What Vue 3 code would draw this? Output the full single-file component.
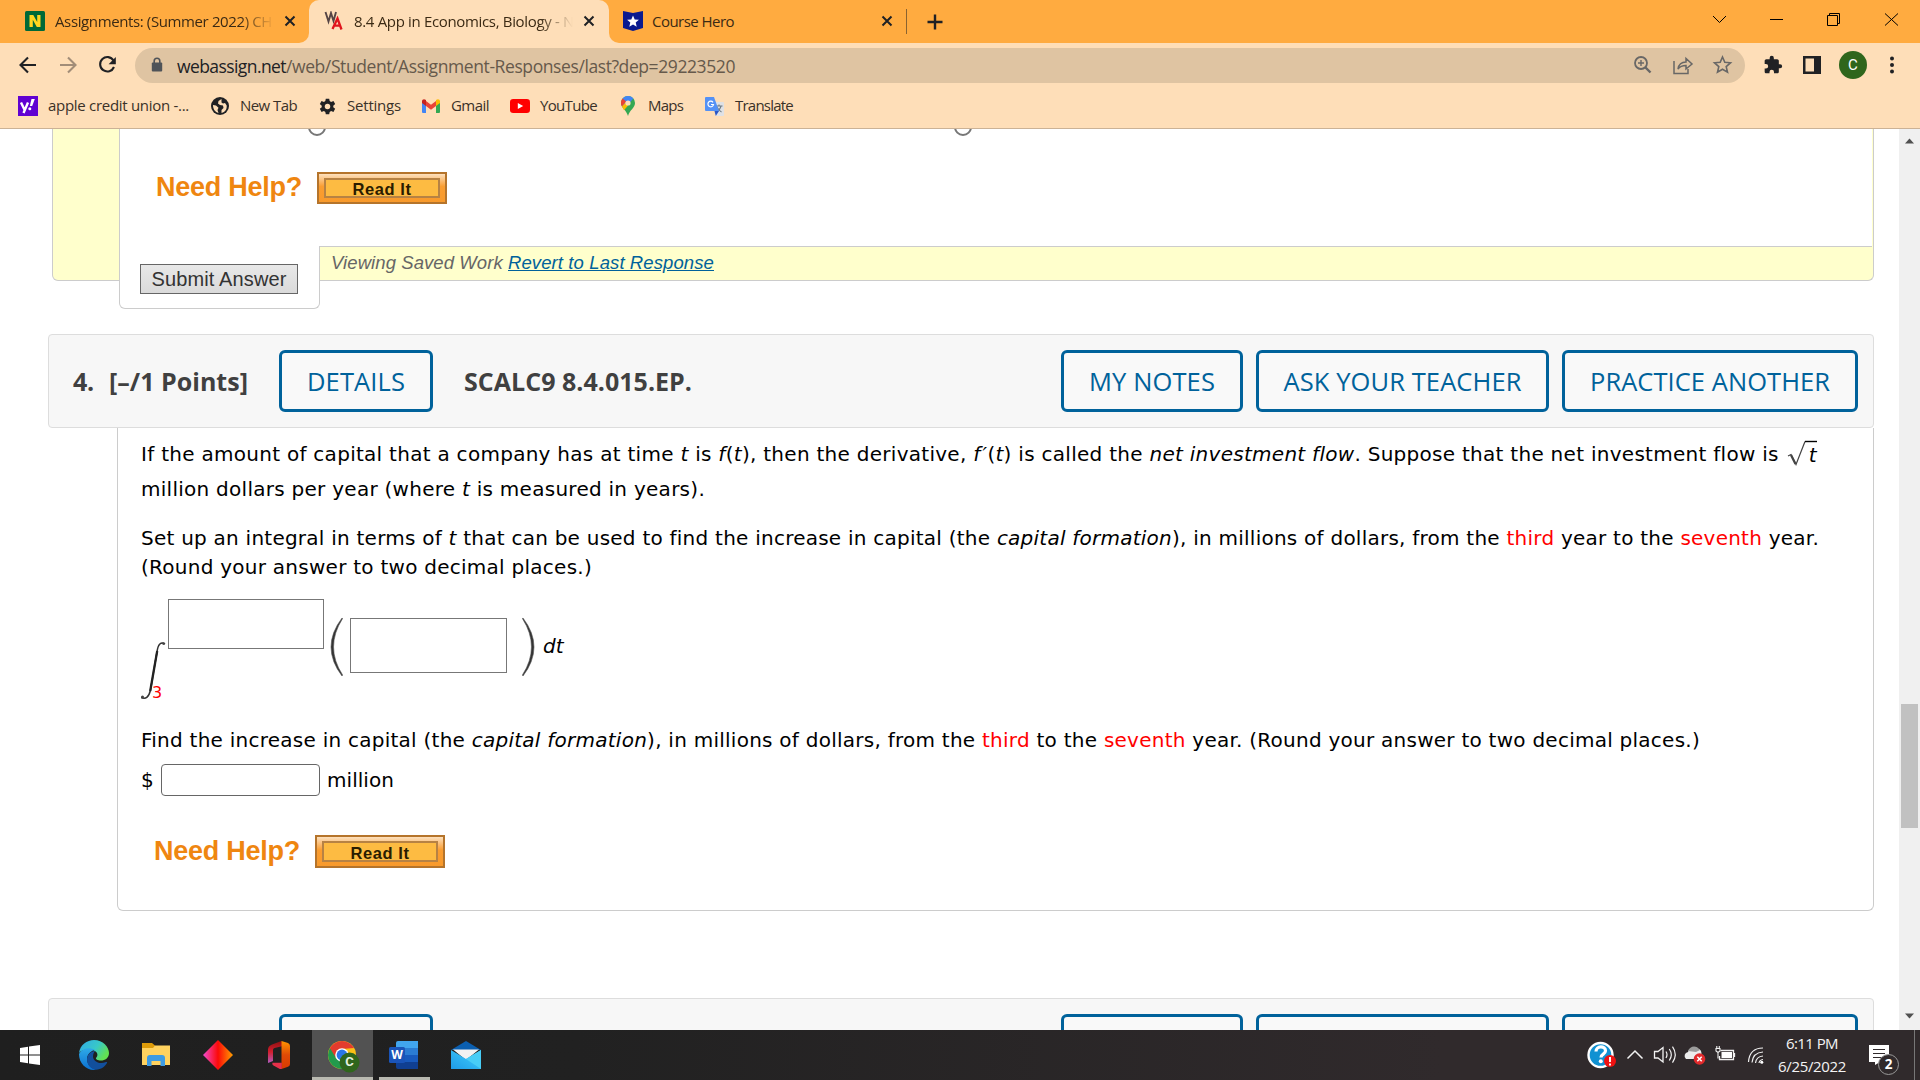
<script setup>
import { ref } from 'vue'

// Spreads letters so that a label takes exactly the given width in pixels.
const vFit = {
  mounted(el, { value }) {
    const natural = el.getBoundingClientRect().width
    const gap = (value - natural) / el.textContent.length
    el.style.letterSpacing = `${gap}px`
  }
}

const third = ref('third')
const seventh = ref('seventh')
const actions = [
  { label: 'MY NOTES', cls: 'notes', w: 126 },
  { label: 'ASK YOUR TEACHER', cls: 'ask', w: 238 },
  { label: 'PRACTICE ANOTHER', cls: 'practice', w: 240 }
]
</script>

<template>
  <div class="screen">
    <header class="tabs">
      <div class="tab tab-first">
        <svg class="fav" width="20" height="20" viewBox="0 0 20 20"><rect width="20" height="20" rx="1.5" fill="#006937" /><path d="M4.5 16V4h3.8l3.9 7V4h3.3v12h-3.7L7.800 8.800V16z" fill="#ffd51f" /></svg>
        <span class="tab-title"><span v-fit="217" class="t">Assignments: (Summer 2022) CH</span></span>
        <svg class="x" width="12" height="12" viewBox="0 0 12 12"><path d="M1.500 1.500l9 9M10.500 1.500l-9 9" /></svg>
      </div>
      <div class="tab tab-active">
        <svg class="fav wa" width="20" height="20" viewBox="0 0 20 20"><path d="M1.500 1l3 9.500L7 2l2.500 8L12 1" fill="none" stroke="#544" stroke-width="1.900" /><path d="M8.500 18l5-10.500L17.500 18.500M10 14.700h6.500" fill="none" stroke="#e0151c" stroke-width="2.300" /></svg>
        <span class="tab-title"><span v-fit="220" class="t">8.4 App in Economics, Biology - N</span></span>
        <svg class="x" width="12" height="12" viewBox="0 0 12 12"><path d="M1.500 1.500l9 9M10.500 1.500l-9 9" /></svg>
      </div>
      <div class="tab tab-last">
        <svg class="fav" width="20" height="20" viewBox="0 0 20 20"><path d="M0 0l10 2L20 0v17l-10 3L0 17z" fill="#0a1a8f" /><path d="M10 4.500l1.700 3.900 4.200.4-3.200 2.800 1 4.100-3.700-2.200-3.700 2.200 1-4.100-3.200-2.800 4.200-.4z" fill="#fff" /></svg>
        <span v-fit="82" class="t">Course Hero</span>
        <svg class="x" width="12" height="12" viewBox="0 0 12 12"><path d="M1.500 1.500l9 9M10.500 1.500l-9 9" /></svg>
      </div>
      <i class="tab-sep"></i>
      <svg class="plus" width="16" height="16" viewBox="0 0 16 16"><path d="M8 .5v15M.5 8h15" stroke="#202124" stroke-width="2.400" /></svg>
      <svg class="win" width="190" height="20" viewBox="0 0 190 20" fill="none" stroke="#000" stroke-width="1">
        <path d="M3 7l6.500 6.500L16 7" /><path d="M60 10.500h13" /><path d="M117.500 6.500h10v10h-10zM119.500 6v-1.500h10v10h-2" /><path d="M175 4.500l13 12M188 4.500l-13 12" />
      </svg>
    </header>

    <div class="toolbar">
      <svg class="nav" width="136" height="36" viewBox="0 0 136 36" fill="none" stroke-width="2.100">
        <path d="M36 18H21M28 10.500L20.500 18l7.500 7.500" stroke="#202124" />
        <path d="M60 18h15M68 10.500l7.500 7.500-7.500 7.500" stroke="#a28d78" />
        <path d="M113.500 13.500A7.200 7.200 0 1 0 114 20" stroke="#202124" /><path d="M115.800 10v7.200h-7.200z" fill="#202124" />
      </svg>
      <div class="omnibox">
        <svg class="lock" width="12" height="16" viewBox="0 0 12 16"><rect x=".8" y="5.500" width="10.400" height="9" rx="1" fill="#4f5358" /><path d="M3.200 6V4a2.800 2.800 0 0 1 5.600 0V6" fill="none" stroke="#4f5358" stroke-width="1.600" /></svg>
        <span class="url"><span v-fit="109" class="t host">webassign.net</span><span v-fit="449" class="t">/web/Student/Assignment-Responses/last?dep=29223520</span></span>
        <svg class="omni-icons" width="100" height="24" viewBox="0 0 100 24" fill="none" stroke="#686766" stroke-width="1.800">
          <circle cx="8" cy="10" r="6" /><path d="M12.500 14.500l5 5" stroke-width="2.400" /><path d="M8 7v6M5 10h6" stroke-width="1.400" />
          <path d="M41 8v12.500h14V16" stroke-width="1.500" /><path d="M45 16c.8-5 4-7 8-7V5.500l6 5.500-6 5v-3.500c-3.500 0-6 .8-8 3.500z" stroke-width="1.500" />
          <path d="M89.500 4l2.300 5.300 5.700.5-4.300 3.800 1.300 5.600-5-3-5 3 1.300-5.600-4.300-3.800 5.700-.5z" stroke-width="1.600" />
        </svg>
      </div>
      <svg class="ext" width="20" height="20" viewBox="0 0 24 24"><path fill="#202124" d="M20.500 11H19V7c0-1.100-.9-2-2-2h-4V3.500a2.500 2.500 0 0 0-5 0V5H4c-1.100 0-2 .9-2 2v3.800h1.500a2.700 2.700 0 0 1 0 5.400H2V20c0 1.100.9 2 2 2h3.800v-1.500a2.700 2.700 0 0 1 5.400 0V22H17c1.100 0 2-.9 2-2v-4h1.500a2.500 2.500 0 0 0 0-5z" /></svg>
      <svg class="side" width="18" height="18" viewBox="0 0 18 18"><path fill="#202124" fill-rule="evenodd" d="M0 0h18v18H0zM2.500 2.500v13H11v-13z" /></svg>
      <span class="avatar">C</span>
      <svg class="dots" width="4" height="18" viewBox="0 0 4 18" fill="#202124"><circle cx="2" cy="2.500" r="2" /><circle cx="2" cy="9" r="2" /><circle cx="2" cy="15.500" r="2" /></svg>
    </div>

    <nav class="bookmarks">
      <a class="bm b1"><svg width="20" height="20" viewBox="0 0 20 20"><rect width="20" height="20" fill="#6001d2" /><path d="M3 6.500l3.400 7M10 6.500L5.500 17" stroke="#fff" stroke-width="2.400" fill="none" /><path d="M13.500 3h3.300l-2.600 7h-2.400z" fill="#fff" /><circle cx="11.800" cy="12.700" r="1.500" fill="#fff" /></svg><span v-fit="141" class="t">apple credit union -...</span></a>
      <a class="bm b2"><svg width="18" height="18" viewBox="0 0 18 18"><circle cx="9" cy="9" r="9" fill="#202124" /><path d="M10.500 2l-3 2-.5 2.500 2 1.500 3 .5.5 2.500-2 2v3c4-1 5.500-4 5.200-7.500L14 6l-2 .5-1.500-1zM2 8l3 .5 2.500 2.200-1 2.300 1 3C4 15 2 12 2 8z" fill="#fedeb8" /></svg><span v-fit="57" class="t">New Tab</span></a>
      <a class="bm b3"><svg width="17" height="17" viewBox="0 0 18 18"><path d="M7.200 0h3.600l.5 2.600 1.500.9L15.300 2.600l1.800 3.100-2 1.700v1.700l2 1.700-1.800 3.200-2.500-.9-1.500.9-.5 2.600H7.200L6.700 14l-1.500-.9-2.500.9L.9 10.800l2-1.700V7.400l-2-1.700 1.800-3.100 2.500.9 1.500-.9z" transform="translate(0 .7)" fill="#202124" /><circle cx="9" cy="9" r="2.900" fill="#fedeb8" /></svg><span v-fit="54" class="t">Settings</span></a>
      <a class="bm b4"><svg width="18" height="14" viewBox="0 0 18 14"><path d="M0 2v11a1 1 0 0 0 1 1h3V5z" fill="#4285f4" /><path d="M18 2v11a1 1 0 0 1-1 1h-3V5z" fill="#34a853" /><path d="M4 2v5l5 3.800L14 7V2L9 5.800z" fill="#ea4335" /><path d="M0 2.200C0 .5 2-.500 3.500.7L4 1v6L0 4z" fill="#c5221f" /><path d="M18 2.200c0-1.700-2-2.700-3.500-1.500L14 1v6l4-3z" fill="#fbbc04" /></svg><span v-fit="38" class="t">Gmail</span></a>
      <a class="bm b5"><svg width="20" height="14" viewBox="0 0 20 14"><rect width="20" height="14" rx="3.200" fill="#f00" /><path d="M7.800 4l5.400 3-5.400 3z" fill="#fff" /></svg><span v-fit="57" class="t">YouTube</span></a>
      <a class="bm b6"><svg width="14" height="20" viewBox="0 0 14 20"><path d="M7 0a7 7 0 0 1 7 7c0 5-5.500 7-7 13C5.500 14 0 12 0 7a7 7 0 0 1 7-7z" fill="#34a853" /><path d="M1.600 2.500A7 7 0 0 1 12.400 2.500L5 10.500 1 9.500z" fill="#4285f4" /><path d="M1.600 2.500L5.200 5.500 1 10.500A7 7 0 0 1 1.600 2.500z" fill="#ea4335" /><path d="M1 10.500l4-4.500 2 3.500-4 4.800z" fill="#fbbc04" /><circle cx="7" cy="7" r="2.600" fill="#fedeb8" /></svg><span v-fit="35" class="t">Maps</span></a>
      <a class="bm b7"><svg width="19" height="19" viewBox="0 0 19 19"><path d="M8 5h10a1 1 0 0 1 1 1v12a1 1 0 0 1-1 1h-7z" fill="#dfe1e5" /><path d="M10.500 9h7M14 7.500V9m2 0c-.8 3-2.500 5-5 6M12 10c1 2 2.500 4 4.500 5" stroke="#6d7a83" stroke-width="1.100" fill="none" /><path d="M1 0h8l5 14H1a1 1 0 0 1-1-1V1a1 1 0 0 1 1-1z" fill="#5491f5" /><path d="M9.500 14H14l-3.200 5z" fill="#2a56c6" /><path d="M8 5.300A2.800 2.800 0 1 0 8.500 7.500H6" stroke="#fff" stroke-width="1.200" fill="none" /></svg><span v-fit="58" class="t">Translate</span></a>
    </nav>

    <div class="view">
      <main class="page">
        <section class="prev">
          <div class="prev-body">
            <div class="radios"><i></i><i></i></div>
            <div class="help">
              <span v-fit="146" class="help-label">Need Help?</span>
              <button class="read"><span v-fit="59">Read It</span></button>
            </div>
          </div>
          <div class="prev-foot">
            <div class="submit-box"><button class="submit"><span v-fit="135">Submit Answer</span></button></div>
            <p class="saved"><span v-fit="177" class="s">Viewing Saved Work&nbsp;</span><a v-fit="206" class="s">Revert to Last Response</a></p>
          </div>
        </section>

        <section class="qhead">
          <span v-fit="21" class="num">4.</span>
          <span v-fit="139" class="pts">[–/1 Points]</span>
          <button class="btn details"><span v-fit="98">DETAILS</span></button>
          <span v-fit="228" class="code">SCALC9 8.4.015.EP.</span>
          <div class="actions">
            <button v-for="a in actions" :key="a.cls" class="btn" :class="a.cls"><span v-fit="a.w">{{ a.label }}</span></button>
          </div>
        </section>

        <section class="qbody">
          <p class="line l1"><span v-fit="1638" class="v">If the amount of capital that a company has at time <em>t</em> is <em>f</em>(<em>t</em>), then the derivative, <em>f<span class="prime">′</span></em>(<em>t</em>) is called the <em>net investment flow</em>. Suppose that the net investment flow is</span><svg class="root" width="32" height="28" viewBox="0 0 32 28"><path d="M1 16l3-1.500 5 10L18 1.500" fill="none" stroke="#444" stroke-width="1.200" /><path d="M4 15l4.500 9" stroke="#444" stroke-width="2.200" /><path d="M18 1.500h12" stroke="#000" stroke-width="1.400" /></svg><em class="rt">t</em></p>
          <p class="line l2"><span v-fit="564" class="v">million dollars per year (where <em>t</em> is measured in years).</span></p>
          <p class="line l3"><span v-fit="1678" class="v">Set up an integral in terms of <em>t</em> that can be used to find the increase in capital (the <em>capital formation</em>), in millions of dollars, from the <b>{{ third }}</b> year to the <b>{{ seventh }}</b> year.</span></p>
          <p class="line l4"><span v-fit="451" class="v">(Round your answer to two decimal places.)</span></p>
          <div class="integral">
            <div class="sign">
              <svg width="26" height="60" viewBox="0 0 26 60"><path d="M0 57.500C5 60 8 56.500 9.500 50L16 12C17 4 20 1.500 24 4" fill="none" stroke="#333" stroke-width="1.500" /><path d="M9.200 51L16.200 11" stroke="#222" stroke-width="2.300" /><circle cx="22.500" cy="3.600" r="1.300" fill="#444" /><circle cx="1.500" cy="57" r="1.500" fill="#444" /></svg>
              <span class="lower">3</span>
            </div>
            <i class="box upper"></i>
            <svg class="paren" width="13" height="60" viewBox="0 0 13 60"><path d="M12 1Q-10 30 12 59L12.600 58Q-5.500 30 12.600 1.500z" fill="#333" stroke="#555" stroke-width=".6" /></svg>
            <i class="box inner"></i>
            <svg class="paren rp" width="13" height="60" viewBox="0 0 13 60"><path d="M1 1Q23 30 1 59L.4 58Q18.500 30 .4 1.500z" fill="#333" stroke="#555" stroke-width=".6" /></svg>
            <em class="dt">dt</em>
          </div>
          <p class="line l5"><span v-fit="1559" class="v">Find the increase in capital (the <em>capital formation</em>), in millions of dollars, from the <b>{{ third }}</b> to the <b>{{ seventh }}</b> year. (Round your answer to two decimal places.)</span></p>
          <div class="answer"><span class="dollar">$</span><input class="field" type="text" aria-label="Answer in millions of dollars" /><span v-fit="67" class="v">million</span></div>
          <div class="help">
            <span v-fit="146" class="help-label">Need Help?</span>
            <button class="read tall"><span v-fit="59">Read It</span></button>
          </div>
        </section>

        <section class="qhead next">
          <button class="btn details"></button>
          <div class="actions">
            <button v-for="a in actions" :key="a.cls" class="btn" :class="a.cls"></button>
          </div>
        </section>
      </main>
      <aside class="scroll">
        <svg width="10" height="6" viewBox="0 0 10 6"><path d="M0 5.500L4.500.5 9 5.500z" fill="#505050" /></svg>
        <i class="thumb"></i>
        <svg width="10" height="6" viewBox="0 0 10 6"><path d="M0 .5L4.500 5.500 9 .5z" fill="#505050" /></svg>
      </aside>
    </div>

    <footer class="taskbar">
      <svg class="start" width="20" height="20" viewBox="0 0 20 20" fill="#fff"><path d="M0 3l8-1.200v7.700H0zM9 1.600L20 0v9.500H9zM0 10.500h8v7.700L0 17zM9 10.500h11V20L9 18.400z" /></svg>
      <svg class="edge" width="30" height="30" viewBox="0 0 30 30">
        <defs>
          <linearGradient id="e1" x1="0" y1="0" x2="1" y2=".5"><stop offset="0" stop-color="#2fa9e8" /><stop offset=".6" stop-color="#38c8c8" /><stop offset="1" stop-color="#62e052" /></linearGradient>
          <linearGradient id="e2" x1="0" y1="0" x2="0" y2="1"><stop offset="0" stop-color="#2eaae8" /><stop offset="1" stop-color="#0b6fd0" /></linearGradient>
        </defs>
        <path d="M0 13C1 5 8 0 15 0c9 0 15 7 15 13 0 5-4 7.500-8 7.500-3.500 0-5.500-1.500-5-2.500 1-1 2-3 1-5C16 9 5 7 0 13z" fill="url(#e1)" />
        <path d="M0 14C3 8 11 6.500 16 10c-4 .5-8 4.500-8 9 0 5 4 9 9 10.800C8 31 0 24 0 14z" fill="url(#e2)" />
        <path d="M16 11c-4 0-8 4-8 8.500C8 26 13 29.500 17 29.800c5-.4 9-3 11-6.800.5-1-.5-1.300-1-1-7 3-13-1-13-5.500 0-2 .8-4 2-5.500z" fill="#124f9c" />
      </svg>
      <svg class="folder" width="28" height="24" viewBox="0 0 28 24"><path d="M0 0h10l3 2.500V6H0z" fill="#dd9b09" /><path d="M0 5h11l2-2.500h15V22H0z" fill="#ffd25f" /><path d="M5 23V15a3 3 0 0 1 3-3h12a3 3 0 0 1 3 3v8h-4.500v-5h-9v5z" fill="#3d9be3" /></svg>
      <svg class="diamond" width="30" height="30" viewBox="0 0 30 30"><defs><linearGradient id="d1"><stop offset="0" stop-color="#f34bd0" /><stop offset=".5" stop-color="#fb0a08" /><stop offset="1" stop-color="#ff9f00" /></linearGradient></defs><path d="M15 0l15 15-15 15L0 15z" fill="url(#d1)" /></svg>
      <svg class="office" width="22" height="28" viewBox="0 0 22 28"><defs><linearGradient id="o1" x1="0" y1="0" x2="0" y2="1"><stop offset="0" stop-color="#8f1010" /><stop offset=".5" stop-color="#d32030" /><stop offset="1" stop-color="#b05cc0" /></linearGradient><linearGradient id="o2" x1="0" y1="0" x2="0" y2="1"><stop offset="0" stop-color="#ff9400" /><stop offset=".5" stop-color="#e04a06" /><stop offset="1" stop-color="#d83b01" /></linearGradient></defs><path d="M13.500 0L4 3.500Q0 5 0 8.500V22l5-2V9q0-1.500 1.500-2L15 5z" fill="url(#o1)" /><path d="M13.500 0L20 2q2 .8 2 3v18q0 2-2 2.700L13.500 28z" fill="url(#o2)" /><path d="M4.500 21.800h9.300V28h-2L5.500 24.500q-2-1.300-1-2.700z" fill="#e5304a" /></svg>
      <div class="tile">
        <svg width="32" height="32" viewBox="0 0 32 32"><circle cx="14" cy="14" r="14" fill="#fbc116" /><path d="M14 14L1.900 7A14 14 0 0 0 14 28l6-10.500z" fill="#229a4c" /><path d="M1.900 7A14 14 0 0 1 26.100 7L14 8 8 17z" fill="#e33b2e" /><circle cx="14" cy="14" r="6.800" fill="#fff" /><circle cx="14" cy="14" r="5.400" fill="#2a76e8" /><circle cx="21.500" cy="21.500" r="10" fill="#2f661c" /></svg>
        <span class="tile-c">C</span>
      </div>
      <div class="word">
        <svg width="30" height="28" viewBox="0 0 30 28"><path d="M7 2a2 2 0 0 1 2-2h20v7H7z" fill="#41a5ee" /><path d="M7 7h22v7H7z" fill="#2b7cd3" /><path d="M7 14h22v7H7z" fill="#185abd" /><path d="M7 21h22v7H9a2 2 0 0 1-2-2z" fill="#103f91" /><rect y="6" width="16" height="16" rx="1.500" fill="#1a54b8" /></svg>
        <span class="word-w">W</span>
      </div>
      <svg class="mail" width="30" height="28" viewBox="0 0 30 28"><defs><linearGradient id="m1" x1="0" y1="1" x2="1" y2="0"><stop offset="0" stop-color="#1f9be8" /><stop offset="1" stop-color="#41d0fb" /></linearGradient></defs><path d="M0 9L15 0l15 9z" fill="#0b5fb0" /><path d="M2 8.500h26L15 19z" fill="#f2f2f2" /><path d="M0 9l15 9L30 9v19H0z" fill="url(#m1)" /><path d="M15 18l15 10V9z" fill="#48cdf6" /></svg>

      <div class="tray">
        <svg class="sys" width="180" height="34" viewBox="0 0 180 34" fill="none" stroke="#f2f2f2" stroke-width="1.500">
          <circle cx="13.500" cy="17" r="12" fill="#1091d2" stroke="#fff" stroke-width="2.400" />
          <path d="M9 13.500c0-6 9.500-6 9.500-.7 0 3.500-4.500 3.200-4.500 6.700" stroke="#fff" stroke-width="3.200" /><circle cx="13.800" cy="23.300" r="2" fill="#fff" stroke="none" />
          <circle cx="23" cy="23" r="6" fill="#ee1111" stroke="none" /><path d="M23 19v5M23 25.500v2" stroke="#fff" stroke-width="1.900" />
          <path d="M40.500 20.500L48 13l7.500 7.500" />
          <path d="M67.500 13.500h3.500l5-4v14.500l-5-4h-3.500z" stroke-width="1.300" /><path d="M79 13.500q2 3 0 6.500M82.300 11q4 5.700 0 11.500M85.500 8.700q5.500 8 0 16" stroke-width="1.200" />
          <path d="M99 21a4 4 0 0 1 2-7c1-4 6-5.500 10-3 4 .5 4 5 3 10z" fill="#ececec" stroke="none" /><path d="M101 13c2-5 8-6.500 12-1l-4 2z" fill="#9b9b9b" stroke="none" />
          <circle cx="112.500" cy="21" r="5.800" fill="#e12a2c" stroke="none" /><path d="M110.300 18.800l4.400 4.400M114.700 18.800l-4.400 4.400" stroke="#fff" stroke-width="1.500" />
          <path d="M133.500 12.500h13v9h-14v-3.500M147.500 15v4" stroke-width="1.300" /><path d="M134.500 14h10.500v6h-10.500z" fill="#fff" stroke="none" /><path d="M129 10.500h4v2.500l-2 1.500-2-1.500zM129.800 8v2M132.300 8v2M131 14.500v6" stroke-width="1.100" />
          <path d="M161.500 24q1-14 14.500-14M165 24.500q1-10 11-10.500M168.500 25q.8-6.500 7.500-7M172 25q.5-3.200 4-3.500" stroke-width="1.200" /><circle cx="174.800" cy="24.200" r="1.500" fill="#fff" stroke="none" />
        </svg>
        <div class="clock"><span v-fit="52">6:11 PM</span><span v-fit="68">6/25/2022</span></div>
        <div class="note"><svg width="20" height="20" viewBox="0 0 20 20"><path d="M0 0h20v17h-9l-5 3v-3H0z" fill="#fff" /><path d="M4 4.500h12M4 8.500h12M4 12.500h9" stroke="#302a2c" stroke-width="1.200" /></svg><span class="count">2</span></div>
        <i class="edge-line"></i>
      </div>
    </footer>
  </div>
</template>

<style>
body { margin: 0; overflow: hidden; }
</style>

<style scoped>
* { box-sizing: border-box; }
p { margin: 0; }
svg { display: block; flex: none; }
button { margin: 0; padding: 0; }
.screen { width: 1920px; height: 1080px; display: flex; flex-direction: column; overflow: hidden; background: #fff; font-family: "Open Sans", "Noto Sans", sans-serif; }
.t, .v, .s, .help-label, button span, .num, .pts, .code, .clock span { display: inline-block; white-space: nowrap; flex: none; }

.tabs { flex: none; height: 43px; background: linear-gradient(#ffab40 0 30px, transparent 30px), linear-gradient(90deg, #ffab40 0 280px, #fedeb8 280px 640px, #ffab40 640px); display: flex; align-items: center; font-size: 15px; color: #3b2a14; }
.tab { height: 43px; display: flex; align-items: center; padding-bottom: 1px; }
.tab .t { line-height: 20px; }
.tab-first { width: 309px; padding-left: 25px; border-bottom-right-radius: 10px; background: #ffab40; }
.tab-active { width: 300px; padding-left: 15px; background: #fedeb8; border-radius: 10px 10px 0 0; }
.tab-last { width: 298px; padding-left: 14px; border-bottom-left-radius: 10px; background: #ffab40; }
.fav { margin-right: 10px; }
.tab-title { width: 218px; overflow: hidden; display: flex; -webkit-mask-image: linear-gradient(90deg, #000 185px, transparent 219px); mask-image: linear-gradient(90deg, #000 185px, transparent 219px); }
.tab-active .tab-title { width: 220px; }
.x { stroke: #202124; stroke-width: 2; margin-left: 11px; }
.tab-active .x { margin-left: 9px; }
.tab-last .fav { margin-right: 9px; }
.tab-last .x { margin-left: 147px; }
.tab-sep { width: 1px; height: 25px; background: #8a6330; margin: -1px 0 0 -1px; }
.plus { margin-left: 20px; }
.win { margin-left: 767px; margin-top: -5px; }

.toolbar { flex: none; height: 43px; background: #fedeb8; display: flex; align-items: center; }
.omnibox { width: 1610px; height: 35px; margin-left: -1px; margin-top: 2px; border-radius: 18px; background: #dfc4a2; display: flex; align-items: center; padding-left: 16px; }
.lock { margin-top: -1px; }
.url { margin-left: 14px; width: 1456px; font-size: 17.500px; line-height: 24px; color: #66594b; white-space: nowrap; margin-top: 1px; }
.host { color: #202124; }
.omni-icons { margin-top: -1px; }
.ext { margin-left: 18px; }
.side { margin-left: 20px; }
.avatar { width: 28px; height: 28px; border-radius: 50%; background: #2f661c; color: #fff; font: 15px/28px Roboto, sans-serif; text-align: center; margin-left: 18px; }
.dots { margin-left: 23px; }

.bookmarks { flex: none; height: 43px; background: #fedeb8; border-bottom: 1px solid #cbb296; display: flex; align-items: center; font-size: 15px; color: #3a3128; padding: 0 0 2px 18px; }
.bm { display: flex; align-items: center; flex: none; }
.bm .t { line-height: 20px; margin-top: -2px; }
.b1 svg { margin-right: 10px; }
.b2 { margin-left: 22px; } .b2 svg { margin-right: 11px; }
.b3 { margin-left: 22px; } .b3 svg { margin-right: 11px; }
.b4 { margin-left: 21px; } .b4 svg { margin-right: 11px; }
.b5 { margin-left: 21px; } .b5 svg { margin-right: 10px; }
.b6 { margin-left: 24px; } .b6 svg { margin-right: 13px; }
.b7 { margin-left: 22px; } .b7 svg { margin-right: 11px; }

.view { flex: 1; min-height: 0; display: flex; overflow: hidden; }
.page { width: 1899px; overflow: hidden; background: #fff; }
.scroll { width: 21px; background: #f0f0f0; display: flex; flex-direction: column; align-items: center; padding: 9px 0 8px; }
.thumb { width: 17px; height: 124px; background: #c1c1c1; margin: 560px 0 185px; flex: none; }

.prev { width: 1822px; height: 152px; margin-left: 52px; background: #ffc; border: 1px solid #ccc; border-top: 0; border-radius: 0 0 6px 6px; }
.prev-body { height: 118px; margin-left: 66px; background: #fff; border-left: 1px solid #ccc; border-bottom: 1px solid #ccc; overflow: hidden; margin-right: 1px; }
.radios { height: 7px; overflow: hidden; display: flex; padding-left: 188px; gap: 628px; align-items: flex-end; }
.radios i { width: 18px; height: 18px; border: 2px solid #777; border-radius: 50%; flex: none; }
.help { display: flex; align-items: center; }
.prev .help { margin: 36px 0 0 36px; }
.help-label { font: bold 27px/32px "Liberation Sans", Arial, sans-serif; color: #ef8610; margin-top: -2px; }
.read { width: 130px; height: 32px; margin-left: 15px; border: 2px solid #b5742b; background: linear-gradient(#fde0bd, #fa9d30 45%, #f89a2c); padding: 4px 4px 2px; font: bold 16.500px/18px "Liberation Sans", Arial, sans-serif; color: #2a1c00; position: relative; }
.read::before { content: ""; position: absolute; inset: 4px 5px 4px; border: 2px solid #b78243; background: #fdbb42; }
.read span { position: relative; }
.tall { height: 33px; }
.prev-foot { display: flex; }
.submit-box { width: 201px; height: 63px; margin: -1px 0 0 66px; background: #fff; border: 1px solid #ccc; border-top: 0; border-radius: 0 0 6px 6px; padding: 18px 0 0 20px; flex: none; }
.submit { width: 158px; height: 30px; border: 1px solid #666; background: linear-gradient(#e8e8e8, #dadada); font: 20px/26px "Liberation Sans", Arial, sans-serif; color: #333; }
.saved { font: italic 18.500px/32px "Liberation Sans", Arial, sans-serif; color: #666; margin-left: 11px; white-space: nowrap; }
.saved a { color: #00629b; text-decoration: underline; }

.qhead { width: 1826px; height: 94px; margin: 53px 0 0 48px; background: #f7f7f7; border: 1px solid #ddd; border-radius: 4px; display: flex; align-items: center; font-size: 25px; color: #404040; padding-right: 15px; }
.num, .pts, .code { font-weight: 700; line-height: 34px; margin-top: -1px; }
.num { margin-left: 24px; }
.pts { margin-left: 15px; }
.btn { height: 62px; border: 3px solid #00629b; border-radius: 6px; background: #f9f9f9; color: #00629b; font: 500 25.500px/34px "Open Sans", "Noto Sans", sans-serif; flex: none; white-space: nowrap; padding-bottom: 1px; }
.details { width: 154px; margin-left: 31px; }
.code { margin-left: 31px; }
.actions { margin-left: auto; display: flex; }
.notes { width: 182px; }
.ask { width: 293px; margin-left: 13px; }
.practice { width: 296px; margin-left: 13px; }
.next { margin-top: 87px; }
.next .details { margin-left: 230px; }

.qbody { width: 1757px; height: 483px; margin-left: 117px; border: 1px solid #ccc; border-top: 0; border-radius: 0 0 6px 6px; padding: 12px 0 0 23px; font-family: "DejaVu Sans", Verdana, sans-serif; font-size: 20px; color: #000; }
.line { height: 28px; line-height: 28px; display: flex; white-space: nowrap; }
.v { white-space: pre; }
.v b { font-weight: 400; color: #f00; }
.prime { margin-left: 2px; }
.l1 { height: 29px; }
.root { margin: 0 0 0 8px; }
.rt { margin-left: -10px; line-height: 31px; }
.l2 { margin-top: 6px; }
.l3 { margin-top: 21px; }
.l4 { margin-top: 1px; }
.integral { display: flex; height: 101px; margin-top: 18px; align-items: flex-start; }
.sign { width: 27px; padding-top: 41px; position: relative; }
.lower { position: absolute; left: 11px; top: 85px; font-size: 16px; line-height: 18px; color: #f00; }
.box { border: 1px solid #777; background: #fff; flex: none; }
.upper { width: 156px; height: 50px; }
.paren { margin: 18px 0 0 6px; }
.inner { width: 157px; height: 55px; margin: 19px 0 0 7px; }
.rp { margin-left: 15px; }
.dt { margin: 32px 0 0 8px; line-height: 30px; }
.l5 { margin-top: 26px; }
.answer { display: flex; align-items: center; height: 32px; margin-top: 10px; }
.dollar { width: 20px; }
.field { width: 159px; height: 32px; margin-right: 7px; border: 1px solid #666; border-radius: 4px; background: #fff; padding: 0; }
.qbody .help { margin: 39px 0 0 13px; }

.taskbar { flex: none; height: 50px; background: linear-gradient(90deg, #1f1f1f 0, #212121 30%, #302a2c 75%, #302a2c); display: flex; align-items: center; }
.start { margin-left: 20px; }
.edge { margin-left: 39px; }
.folder { margin-left: 33px; }
.diamond { margin-left: 33px; }
.office { margin-left: 35px; }
.tile { margin-left: 22px; width: 61px; height: 50px; background: #525252; border-bottom: 3px solid #b9b9b0; padding: 11px 0 0 16px; position: relative; }
.tile-c { position: absolute; left: 28px; top: 22px; width: 19px; text-align: center; color: #e6f0e0; font: bold 13px/20px Roboto, sans-serif; }
.word { margin-left: 6px; width: 51px; height: 50px; border-bottom: 3px solid #b9b9b0; padding: 11px 0 0 10px; position: relative; }
.word-w { position: absolute; left: 10px; top: 16px; width: 16px; text-align: center; font: bold 12px/18px "Open Sans", sans-serif; color: #fff; }
.mail { margin-left: 21px; }
.tray { margin-left: auto; display: flex; align-items: center; height: 50px; }
.sys { margin-right: 11px; }
.clock { width: 68px; display: flex; flex-direction: column; align-items: center; font-size: 15px; line-height: 23px; color: #f4f4f4; }
.note { position: relative; margin-left: 23px; width: 45px; height: 20px; }
.count { position: absolute; left: 9px; top: 9px; width: 21px; height: 21px; border-radius: 50%; border: 1px solid #999; background: #302a2c; color: #fff; text-align: center; font: bold 13.500px/19px "Open Sans", sans-serif; }
.edge-line { width: 1px; height: 50px; background: #777; margin-right: 5px; }
</style>
